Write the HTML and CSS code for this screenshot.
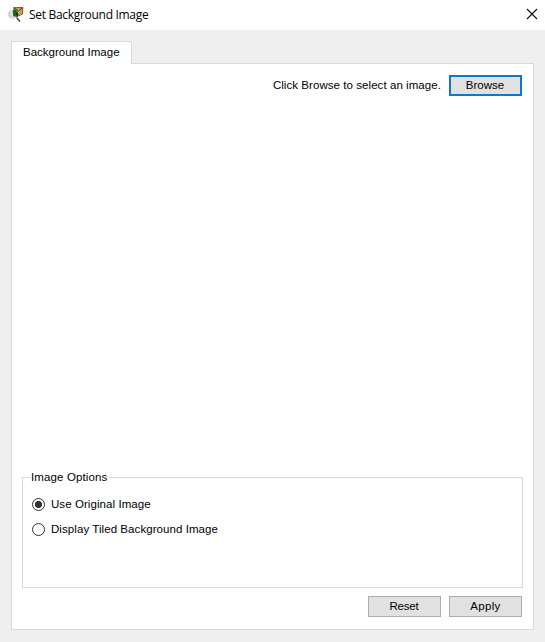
FILE: index.html
```html
<!DOCTYPE html>
<html lang="en">
<head>
<meta charset="utf-8">
<title>Set Background Image</title>
<link rel="stylesheet" href="styles.css">
</head>
<body>
<div class="window">
  <header class="titlebar">
    <svg class="app-icon" width="16" height="16" viewBox="0 0 16 16">
      <ellipse cx="4.4" cy="7.4" rx="4.2" ry="4.6" fill="#dcdcdc"/>
      <path d="M1.5 4.5Q0 7.5 2 10.5" fill="none" stroke="#bdbdbd" stroke-width=".8"/>
      <path d="M5.5.7 14.8.5 14.5 7 9 9.5Z" fill="#c9a35a" stroke="#4b3a1b" stroke-width=".8"/>
      <path d="M6 1 10.5 4 14.5 .8" fill="none" stroke="#4b3a1b" stroke-width=".9"/>
      <path d="M4.8 3 8 2.5 10 6 9.3 10 5.2 9.3Z" fill="#126b1d"/>
      <path d="M7.8 5 10.3 7 9.5 9.8Z" fill="#101a10"/>
      <path d="M8.5 10.5 12 14.5" stroke="#444" stroke-width="1.5"/>
    </svg>
    <h1 class="title">Set Background Image</h1>
    <svg class="close" width="12" height="12" viewBox="0 0 12 12"><path d="M1 1 11 11M11 1 1 11" stroke="#111" stroke-width="1.15"/></svg>
  </header>
  <main class="content">
    <div class="tab">Background Image</div>
    <section class="panel">
      <div class="browse-row">
        <span class="hint">Click Browse to select an image.</span>
        <button class="button focused">Browse</button>
      </div>
      <div class="preview"></div>
      <fieldset class="options">
        <legend class="legend">Image Options</legend>
        <label class="option"><span class="radio checked"></span><span class="option-text">Use Original Image</span></label>
        <label class="option"><span class="radio"></span><span class="option-text">Display Tiled Background Image</span></label>
      </fieldset>
      <div class="actions">
        <button class="button reset">Reset</button>
        <button class="button apply">Apply</button>
      </div>
    </section>
  </main>
</div>
</body>
</html>
```
FILE: styles.css
```css
* { box-sizing: border-box; }
body {
  margin: 0;
  background: #efefef;
  color: #000;
  font: 11.5px/14px "Liberation Sans", Arial, sans-serif;
  letter-spacing: 0;
}
.window { width: 545px; height: 642px; display: flex; flex-direction: column; }
.titlebar {
  height: 30px;
  display: flex;
  align-items: center;
  padding: 0 7px 0 8px;
  background: #fff;
}
.app-icon { margin-bottom: 1px; }
.title {
  flex: 1;
  margin: 0 0 0 5px;
  font: 12px/16px "Open Sans", "Noto Sans", sans-serif;
  letter-spacing: -.3px;
}
.close { margin-bottom: 2px; }
.content { flex: 1; display: flex; flex-direction: column; padding: 11px 11px 12px 11px; }
.tab {
  width: 121px;
  height: 23px;
  margin-bottom: -1px;
  padding: 3px 0 0 11px;
  background: #fff;
  border: 1px solid #d9d9d9;
  border-bottom: 0;
  z-index: 1;
}
.panel {
  flex: 1;
  display: flex;
  flex-direction: column;
  padding: 11px 10px 12px;
  background: #fff;
  border: 1px solid #d9d9d9;
}
.browse-row { display: flex; justify-content: flex-end; align-items: center; gap: 8px; padding-right: 1px; }
.hint { padding-bottom: 2px; letter-spacing: .06px; }
.button {
  width: 73px;
  height: 21px;
  padding: 0 0 1px;
  border: 1px solid #adadad;
  background: #e1e1e1;
  color: #000;
  font: inherit;
  letter-spacing: -.1px;
}
.focused { border: 2px solid #0f78c8; padding-right: 1px; letter-spacing: 0; }
.reset { padding-right: 1px; letter-spacing: -.2px; }
.apply { letter-spacing: .3px; }
.preview { flex: 1; }
.options {
  height: 118px;
  margin: 0;
  padding: 8px 9px 0;
  border: 1px solid #d9d9d9;
}
.legend { padding: 0 2px 0 1px; margin-left: -2px; letter-spacing: .12px; }
.option { display: flex; align-items: center; gap: 6px; height: 25px; }
.option-text { padding-bottom: 1px; letter-spacing: .07px; }
.radio {
  width: 13px;
  height: 13px;
  border: 1px solid #333;
  border-radius: 50%;
}
.checked { background: radial-gradient(circle, #333 3.2px, #fff 3.9px); }
.actions { display: flex; justify-content: flex-end; gap: 8px; padding: 8px 1px 0 0; }
```
